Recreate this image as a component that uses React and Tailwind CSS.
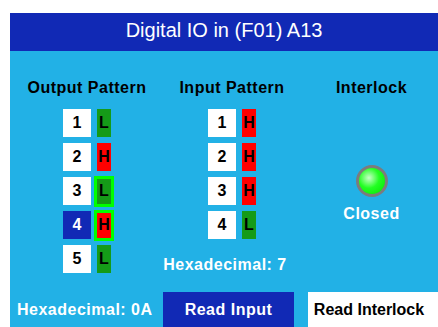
import React from 'react';

const outputs = [
  { n: 1, v: 'L' },
  { n: 2, v: 'H' },
  { n: 3, v: 'L', focus: true },
  { n: 4, v: 'H', focus: true, selected: true },
  { n: 5, v: 'L' },
];

const inputs = [
  { n: 1, v: 'H' },
  { n: 2, v: 'H' },
  { n: 3, v: 'H' },
  { n: 4, v: 'L' },
];

const Row = ({ n, v, focus, selected }) => {
  const level = v === 'H' ? 'bg-[#ff0000]' : 'bg-[#159b18]';
  return (
    <div className="flex items-center gap-[6px] h-[28px]">
      <div
        className={`w-[28px] h-[28px] flex items-center justify-center text-[16px] font-bold ${
          selected ? 'bg-[#1129b5] text-white' : 'bg-white text-black'
        }`}
      >
        {n}
      </div>
      {focus ? (
        <div className={`-mx-[3px] w-[20px] h-[31px] border-[3px] border-[#00ff00] flex items-center justify-center text-[16px] font-bold text-black ${level}`}>
          {v}
        </div>
      ) : (
        <div className={`w-[14px] h-[28px] flex items-center justify-center text-[16px] font-bold text-black ${level}`}>
          {v}
        </div>
      )}
    </div>
  );
};

export default function App() {
  return (
    <div
      className="w-[438px] h-[327px] bg-white pl-[10px] pt-[13px] overflow-hidden"
      style={{ fontFamily: '"Liberation Sans", Arial, sans-serif' }}
    >
      <div className="flex flex-col h-full">
        <div className="h-[38px] bg-[#1129b5] text-white text-[20px] flex items-center justify-center pb-[4px]">
          Digital IO in (F01) A13
        </div>

        <div className="flex-1 bg-[#22b1e6] flex flex-col">
          <div className="flex pl-[5px] pt-[28px]">
            {/* Output Pattern */}
            <div className="w-[144px] flex flex-col items-center">
              <div className="h-[18px] flex items-center text-[16px] font-bold tracking-[0.5px] text-black">
                Output Pattern
              </div>
              <div className="mt-[12px] flex flex-col gap-[6px]">
                {outputs.map((o) => (
                  <Row key={o.n} {...o} />
                ))}
              </div>
            </div>

            {/* Input Pattern */}
            <div className="w-[146px] flex flex-col items-center">
              <div className="h-[18px] flex items-center text-[16px] font-bold tracking-[0.5px] text-black">
                Input Pattern
              </div>
              <div className="mt-[12px] flex flex-col gap-[6px]">
                {inputs.map((o) => (
                  <Row key={o.n} {...o} />
                ))}
              </div>
              <div className="mt-[17px] h-[18px] flex items-center pr-[14px] text-[16px] font-bold tracking-[0.5px] text-white">
                Hexadecimal: 7
              </div>
            </div>

            {/* Interlock */}
            <div className="flex-1 flex flex-col items-center">
              <div className="h-[18px] flex items-center text-[16px] font-bold tracking-[0.5px] text-black">
                Interlock
              </div>
              <div className="mt-[68px] w-[32px] h-[32px] rounded-full border-[3px] border-[#7c7c7c] bg-[radial-gradient(circle_at_38%_38%,#c8ffc8,#22ff22_45%,#00e400)]" />
              <div className="mt-[9px] h-[16px] flex items-center text-[16px] font-bold tracking-[0.5px] text-white">
                Closed
              </div>
            </div>
          </div>

          <div className="mt-auto flex h-[35px]">
            <div className="w-[153px] pl-[7px] flex items-center text-[16px] font-bold tracking-[0.5px] text-white">
              Hexadecimal: 0A
            </div>
            <div className="w-[131px] bg-[#1129b5] flex items-center justify-center text-[16px] font-bold tracking-[0.5px] text-white">
              Read Input
            </div>
            <div className="ml-[14px] flex-1 bg-white flex items-center justify-center pr-[8px] text-[16px] font-bold text-black">
              Read Interlock
            </div>
          </div>
        </div>
      </div>
    </div>
  );
}
